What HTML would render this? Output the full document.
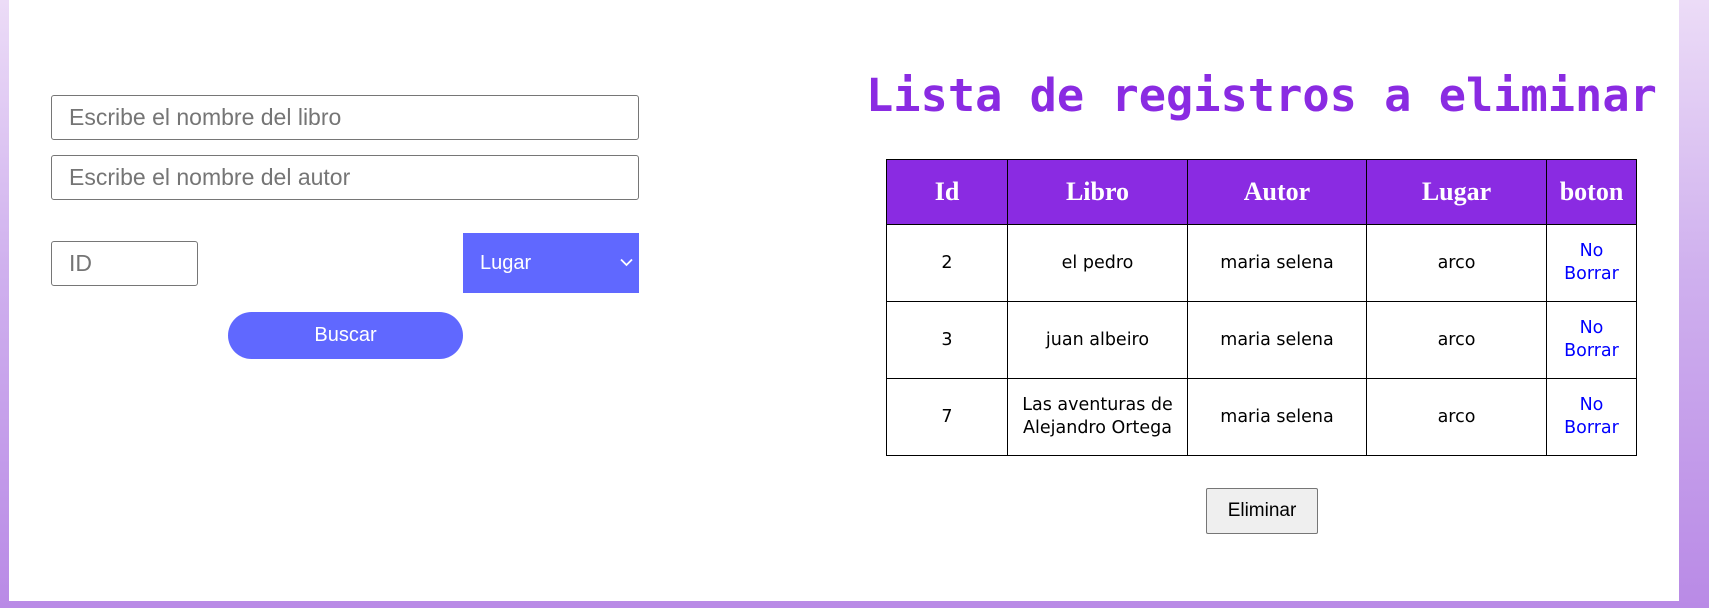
<!DOCTYPE html>
<html><head><meta charset="utf-8"><style>
*{box-sizing:border-box;margin:0;padding:0}
html,body{width:1709px;height:608px;overflow:hidden}
body{background:linear-gradient(180deg,#ecdcf7 0%,#cfb0ee 45%,#b98ae6 100%);position:relative;font-family:"Liberation Sans",sans-serif}
.main{position:absolute;left:9px;top:0;width:1670px;height:601px;background:#fff}
.inp{position:absolute;border:1px solid #767676;border-radius:3px;background:#fff;color:#757575;font-size:23px;padding-left:17px;display:flex;align-items:center}
.sel{position:absolute;left:463px;top:233px;width:176px;height:60px;background:#6068ff;color:#fff;font-size:20px;display:flex;align-items:center;padding-left:17px}
.btn{position:absolute;left:228px;top:312px;width:235px;height:47px;border-radius:24px;background:#6068ff;color:#fff;font-size:20px;display:flex;align-items:center;justify-content:center}
h1{position:absolute;left:866px;top:66px;font-family:"DejaVu Sans Mono","Liberation Mono",monospace;font-weight:bold;font-size:45.3px;color:#8a2be2;white-space:nowrap;line-height:60px}
table{position:absolute;left:886px;top:159px;border-collapse:collapse;width:751px}
th,td{border:1px solid #000;text-align:center}
th{background:#8a2be2;color:#fff;font-family:"Liberation Serif",serif;font-weight:bold;font-size:26px;height:65px}
td{font-family:"DejaVu Sans",sans-serif;font-size:17.5px;height:77px;line-height:23px}
td.b{color:#00f}
.el{position:absolute;left:1206px;top:488px;width:112px;height:46px;background:#efefef;border:1px solid #767676;border-radius:2px;font-size:19px;display:flex;align-items:center;justify-content:center;color:#000}
</style></head><body>
<div class="main"></div>
<div class="inp" style="left:51px;top:95px;width:588px;height:45px">Escribe el nombre del libro</div>
<div class="inp" style="left:51px;top:155px;width:588px;height:45px">Escribe el nombre del autor</div>
<div class="inp" style="left:51px;top:241px;width:147px;height:45px">ID</div>
<div class="sel">Lugar<svg style="position:absolute;right:6px;top:25px" width="13" height="9" viewBox="0 0 13 9"><path d="M1 1.5l5.5 5.5 5.5-5.5" stroke="#fff" stroke-width="1.8" fill="none"/></svg></div>
<div class="btn">Buscar</div>
<h1>Lista de registros a eliminar</h1>
<table>
<tr><th style="width:121px">Id</th><th style="width:180px">Libro</th><th style="width:179px">Autor</th><th style="width:180px">Lugar</th><th>boton</th></tr>
<tr><td>2</td><td>el pedro</td><td>maria selena</td><td>arco</td><td class="b">No<br>Borrar</td></tr>
<tr><td>3</td><td>juan albeiro</td><td>maria selena</td><td>arco</td><td class="b">No<br>Borrar</td></tr>
<tr><td>7</td><td>Las aventuras de<br>Alejandro Ortega</td><td>maria selena</td><td>arco</td><td class="b">No<br>Borrar</td></tr>
</table>
<div class="el">Eliminar</div>
</body></html>
